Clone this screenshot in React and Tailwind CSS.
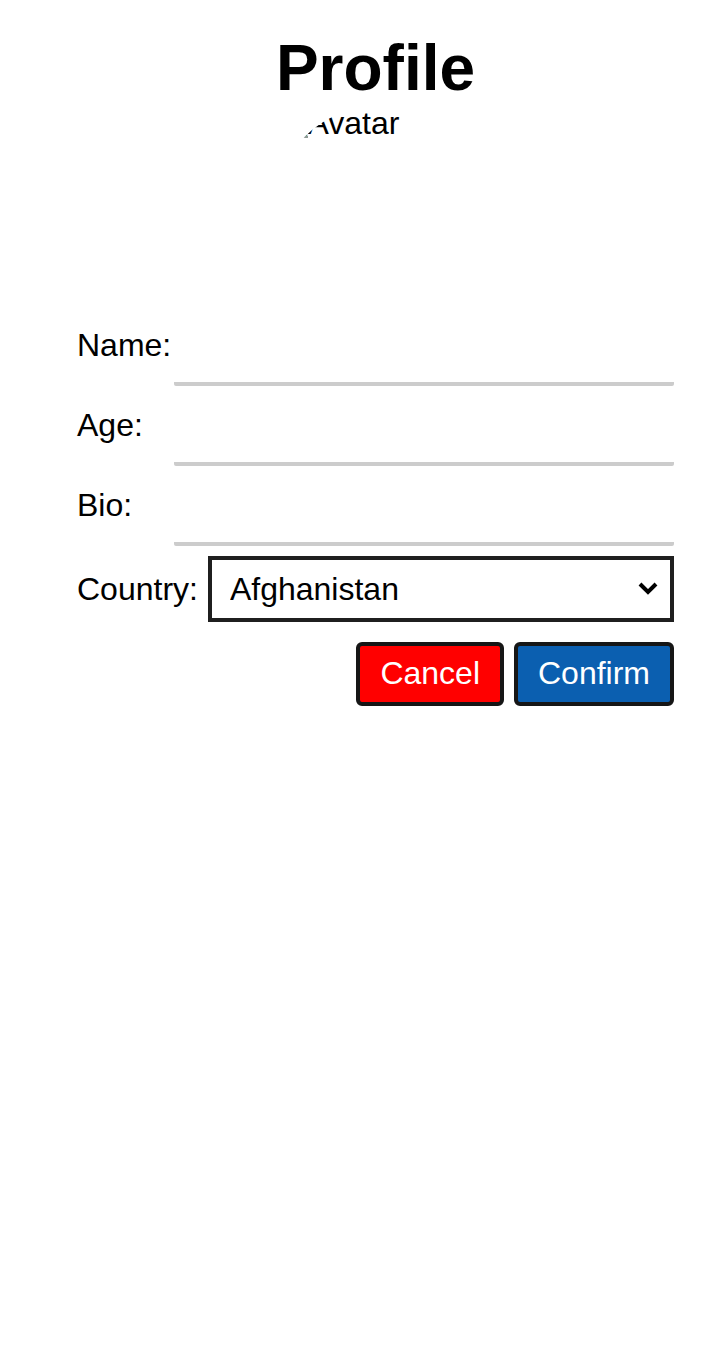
const fields = [
  { id: 'name', label: 'Name:', type: 'text' },
  { id: 'age', label: 'Age:', type: 'text' },
  { id: 'bio', label: 'Bio:', type: 'text' },
];

function Avatar() {
  return (
    <div
      role="img"
      aria-label="Avatar"
      className="flex size-50 items-start overflow-hidden rounded-full leading-8"
    >
      <svg viewBox="0 0 32 32" className="size-8 shrink-0" aria-hidden="true">
        <path d="M24 30 L32 22 V30 Z" fill="#c5d3e6" />
        <path d="M27 29 L31 26 V29 Z" fill="#5b9a6a" />
        <path d="M24 29 H32 V31 H24 Z" fill="#8f9994" />
      </svg>
      <span>Avatar</span>
    </div>
  );
}

function Field({ id, label, type }) {
  return (
    <div className="flex h-[79px] items-center">
      <label htmlFor={id} className="w-[97px] shrink-0 pb-[3px]">
        {label}
      </label>
      <input
        id={id}
        name={id}
        type={type}
        className="h-full min-w-0 flex-1 rounded-xs border-b-4 border-[#cccccc] bg-transparent outline-none"
      />
    </div>
  );
}

export default function App() {
  return (
    <main className="flex min-h-screen flex-col bg-white pt-[33px] pr-11 pl-[77px] font-['Liberation_Sans',Arial,sans-serif] text-[32px] leading-9 text-black">
      <div className="flex flex-col items-center">
        <h1 className="pb-1 text-[64px] leading-[70px] font-bold">Profile</h1>
        <Avatar />
      </div>
      <form className="flex flex-col">
        <div className="flex flex-col gap-px">
          {fields.map((field) => (
            <Field key={field.id} {...field} />
          ))}
        </div>
        <div className="flex items-center gap-2.5 pt-2.5">
          <label htmlFor="country">Country:</label>
          <div className="relative flex-1">
            <select
              id="country"
              name="country"
              defaultValue="Afghanistan"
              className="h-[66px] w-full appearance-none border-4 border-[#1f1f1f] bg-white pr-12 pl-[18px] outline-none"
            >
              <option>Afghanistan</option>
            </select>
            <svg
              viewBox="0 0 20 14"
              className="pointer-events-none absolute top-1/2 right-4 h-3.5 w-5 -translate-y-1/2"
              fill="none"
              stroke="black"
              strokeWidth="4"
              aria-hidden="true"
            >
              <path d="M2 2 L10 10 L18 2" />
            </svg>
          </div>
        </div>
        <div className="flex justify-end gap-2.5 pt-5 text-white">
          <button
            type="button"
            className="h-16 rounded-md border-4 border-[#161616] bg-[#ff0000] px-5 pb-0.5"
          >
            Cancel
          </button>
          <button
            type="button"
            className="h-16 rounded-md border-4 border-[#161616] bg-[#0b5fb0] px-5 pb-0.5"
          >
            Confirm
          </button>
        </div>
      </form>
    </main>
  );
}
